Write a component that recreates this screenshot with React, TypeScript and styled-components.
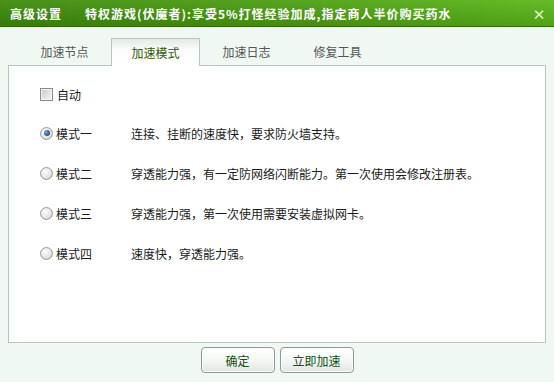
import styled, { createGlobalStyle } from 'styled-components';

const GlobalStyle = createGlobalStyle`
  html, body {
    margin: 0;
    padding: 0;
    background: #f0f8f3;
  }
  body {
    font-family: "Noto Sans CJK SC", "DejaVu Sans", sans-serif;
    font-size: 12px;
    color: #1a1a1a;
  }
`;

const Window = styled.div`
  width: 554px;
  height: 382px;
  display: flex;
  flex-direction: column;
  background: #f0f8f3;
`;

const TitleBar = styled.div`
  height: 26px;
  flex-shrink: 0;
  display: flex;
  align-items: center;
  padding: 0 8px 0 10px;
  background:
    linear-gradient(180deg, rgba(255, 255, 255, 0.06) 0%, rgba(0, 0, 0, 0.12) 100%),
    linear-gradient(90deg, #3d8c0c 0%, #4c9e12 50%, #5cb81a 100%);
  border-bottom: 1px solid #2f6d08;
  color: #fff;
  font-weight: bold;
  font-size: 12px;
  letter-spacing: 1px;
`;

const TitleMain = styled.span`
  width: 75px;
`;

const TitleNote = styled.span`
  flex: 1;
`;

const CloseButton = styled.span`
  width: 14px;
  display: flex;
  justify-content: center;
  color: #dff5c8;
  font-size: 15px;
  letter-spacing: 0;
`;

const TabRow = styled.div`
  display: flex;
  gap: 2px;
  padding: 11px 0 0 20px;
  height: 28px;
  box-sizing: content-box;
  margin-bottom: -1px;
  position: relative;
  z-index: 1;
`;

const Tab = styled.div<{ $active?: boolean }>`
  width: 89px;
  height: 27px;
  display: flex;
  align-items: center;
  justify-content: center;
  box-sizing: border-box;
  color: ${(p) => (p.$active ? '#2d5a05' : '#555')};
  ${(p) =>
    p.$active
      ? `
    background: linear-gradient(180deg, #e4e8e4 0%, #fbfcfb 40%, #ffffff 100%);
    border: 1px solid #bcc6bf;
    border-bottom: none;
    height: 28px;
  `
      : ''}
`;

const Panel = styled.div`
  margin: 0 8px;
  height: 278px;
  background: #fff;
  border: 1px solid #b9c4bd;
  display: flex;
  flex-direction: column;
  padding: 20px 0 0 31px;
  box-sizing: border-box;
`;

const CheckRow = styled.label`
  display: flex;
  align-items: center;
  gap: 4px;
  height: 16px;
  margin-bottom: 23px;
`;

const CheckBox = styled.span`
  width: 11px;
  height: 11px;
  border: 1px solid #8a8a8a;
  background: linear-gradient(135deg, #c8c8c8 0%, #e6e6e6 60%, #f4f4f4 100%);
  box-shadow: inset 0 0 0 1px #f6f6f6;
`;

const ModeList = styled.div`
  display: flex;
  flex-direction: column;
  gap: 24px;
`;

const ModeRow = styled.div`
  display: flex;
  align-items: center;
  height: 16px;
`;

const Radio = styled.span<{ $checked?: boolean }>`
  width: 11px;
  height: 11px;
  border-radius: 50%;
  border: 1px solid #9a9a9a;
  background: radial-gradient(circle at 40% 35%, #ffffff 0%, #e4e4e4 55%, #c4c4c4 100%);
  display: flex;
  align-items: center;
  justify-content: center;
  margin-right: 3px;

  &::after {
    content: '';
    display: ${(p) => (p.$checked ? 'block' : 'none')};
    width: 6px;
    height: 6px;
    border-radius: 50%;
    background: radial-gradient(circle at 35% 35%, #7fa7d8 0%, #2c5a9a 60%, #16355f 100%);
  }
`;

const ModeName = styled.span`
  width: 75px;
`;

const ModeDesc = styled.span``;

const Footer = styled.div`
  display: flex;
  justify-content: center;
  gap: 5px;
  padding-top: 4px;
`;

const Button = styled.button`
  width: 74px;
  height: 26px;
  border: 1px solid #8f9a92;
  border-radius: 4px;
  background: linear-gradient(180deg, #ffffff 0%, #f5f7f5 50%, #e2e6e2 100%);
  color: #0f5214;
  font-family: "Noto Sans CJK SC", "DejaVu Sans", sans-serif;
  font-size: 12px;
  padding: 0;
  cursor: pointer;
  box-shadow: inset 0 0 0 1px #fbfbfb;
`;

const tabs = ['加速节点', '加速模式', '加速日志', '修复工具'];

const modes = [
  { name: '模式一', desc: '连接、挂断的速度快，要求防火墙支持。', checked: true },
  { name: '模式二', desc: '穿透能力强，有一定防网络闪断能力。第一次使用会修改注册表。' },
  { name: '模式三', desc: '穿透能力强，第一次使用需要安装虚拟网卡。' },
  { name: '模式四', desc: '速度快，穿透能力强。' },
];

export default function App() {
  return (
    <>
      <GlobalStyle />
      <Window>
        <TitleBar>
          <TitleMain>高级设置</TitleMain>
          <TitleNote>特权游戏(伏魔者):享受5%打怪经验加成,指定商人半价购买药水</TitleNote>
          <CloseButton>✕</CloseButton>
        </TitleBar>
        <TabRow>
          {tabs.map((t) => (
            <Tab key={t} $active={t === '加速模式'}>
              {t}
            </Tab>
          ))}
        </TabRow>
        <Panel>
          <CheckRow>
            <CheckBox />
            自动
          </CheckRow>
          <ModeList>
            {modes.map((m) => (
              <ModeRow key={m.name}>
                <Radio $checked={m.checked} />
                <ModeName>{m.name}</ModeName>
                <ModeDesc>{m.desc}</ModeDesc>
              </ModeRow>
            ))}
          </ModeList>
        </Panel>
        <Footer>
          <Button>确定</Button>
          <Button>立即加速</Button>
        </Footer>
      </Window>
    </>
  );
}
